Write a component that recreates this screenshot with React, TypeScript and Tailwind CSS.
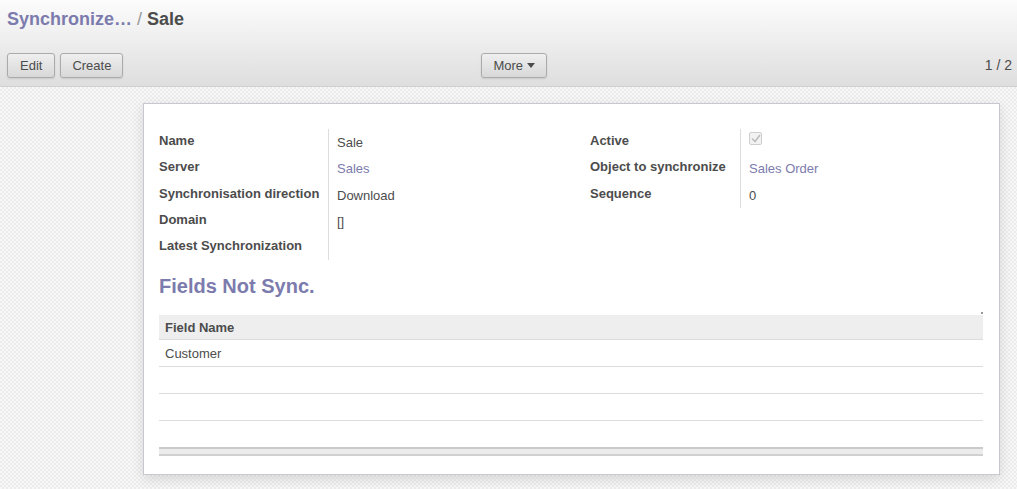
import { useState } from 'react';

const left = [
  { label: 'Name', value: 'Sale' },
  { label: 'Server', value: 'Sales', link: true },
  { label: 'Synchronisation direction', value: 'Download' },
  { label: 'Domain', value: '[]' },
  { label: 'Latest Synchronization', value: '' },
];

const right = [
  { label: 'Active', check: true },
  { label: 'Object to synchronize', value: 'Sales Order', link: true },
  { label: 'Sequence', value: '0' },
];

function Btn({ children, wide }: { children: React.ReactNode; wide?: boolean }) {
  return (
    <button
      className={`h-[25px] rounded-[3px] border border-[#ababab] bg-gradient-to-b from-[#efefef] to-[#d8d8d8] text-[13px] text-[#4c4c4c] shadow-[0_1px_2px_rgba(0,0,0,0.1)] ${wide ? 'px-[12px]' : 'px-[11px]'}`}
    >
      {children}
    </button>
  );
}

export default function App() {
  const [checked] = useState(true);
  return (
    <div className="h-[489px] w-[1017px] overflow-hidden font-['Liberation_Sans',Arial,sans-serif] text-[13px] text-[#4c4c4c]">
      <header className="flex h-[87px] flex-col border-b border-[#d0d0d0] bg-gradient-to-b from-[#fcfcfc] to-[#dedede] px-[7px]">
        <div className="mt-[8px] flex items-baseline gap-[5px] text-[18px] leading-[22px]">
          <span className="font-bold text-[#7c7bad]">Synchronize…</span>
          <span className="text-[#999]">/</span>
          <span className="font-bold text-[#4c4c4c]">Sale</span>
        </div>
        <div className="mt-[23px] flex items-center">
          <div className="flex gap-[5px]">
            <Btn wide>Edit</Btn>
            <Btn>Create</Btn>
          </div>
          <div className="ml-[358px]">
            <Btn>
              <span className="flex items-center gap-[4px]">
                More
                <svg width="8" height="5" viewBox="0 0 8 5"><path d="M0 0h8L4 5z" fill="#4c4c4c" /></svg>
              </span>
            </Btn>
          </div>
          <div className="ml-auto mr-[-2px] text-[14px] text-[#4c4c4c]">1 / 2</div>
        </div>
      </header>

      <main className="h-[402px] bg-[repeating-conic-gradient(#ececec_0%_25%,#f8f8f8_0%_50%)] bg-[length:4px_4px] pl-[143px] pr-[17px] pt-[16px]">
        <div className="h-[372px] border border-[#c8c8d3] bg-white px-[15px] pt-[25px] shadow-[0_4px_12px_rgba(0,0,0,0.12)]">
          <div className="flex items-start">
            <div className="flex w-[431px]">
              <div className="w-[170px] border-r border-[#ddd]">
                {left.map((f) => (
                  <div key={f.label} className="h-[26.25px] pt-[4px] font-bold leading-[16px]">{f.label}</div>
                ))}
              </div>
              <div className="pl-[8px]">
                {left.map((f) => (
                  <div key={f.label} className={`h-[26.25px] pt-[6px] leading-[16px] ${f.link ? 'text-[#7c7bad]' : ''}`}>
                    {f.value}
                  </div>
                ))}
              </div>
            </div>
            <div className="flex">
              <div className="w-[151px] border-r border-[#ddd]">
                {right.map((f) => (
                  <div key={f.label} className="h-[26.25px] pt-[4px] font-bold leading-[16px]">{f.label}</div>
                ))}
              </div>
              <div className="pl-[8px]">
                {right.map((f) => (
                  <div key={f.label} className={`h-[26.25px] pt-[6px] leading-[16px] ${f.link ? 'text-[#7c7bad]' : ''}`}>
                    {f.check ? (
                      <span className="-mt-[3px] flex h-[13px] w-[13px] items-center justify-center rounded-[2px] border border-[#cfcfcf] bg-[#f2f2f2]">
                        {checked && (
                          <svg width="10" height="9" viewBox="0 0 10 9"><path d="M1 4.5l3 3L9 1" stroke="#bdbdbd" strokeWidth="1.6" fill="none" /></svg>
                        )}
                      </span>
                    ) : (
                      f.value
                    )}
                  </div>
                ))}
              </div>
            </div>
          </div>

          <h2 className="mt-[14px] text-[20px] font-bold leading-[24px] text-[#7c7bad]">Fields Not Sync.</h2>

          <div className="relative mt-[17px] mr-[1px]">
            <span className="absolute -top-[3px] right-0 h-[2px] w-[2px] bg-[#999]" />
            <div className="h-[25px] border-b border-[#ddd] bg-[#eeeeee] pl-[6px] font-bold leading-[25px]">Field Name</div>
            <div className="h-[27px] border-b border-[#ddd] pl-[6px] leading-[27px]">Customer</div>
            <div className="h-[27px] border-b border-[#ddd]" />
            <div className="h-[27px] border-b border-[#ddd]" />
            <div className="h-[26px]" />
            <div className="h-[9px] border-y-2 border-t-[#cacaca] border-b-[#d0d0d0] bg-[#ececec]" />
          </div>
        </div>
      </main>
    </div>
  );
}
